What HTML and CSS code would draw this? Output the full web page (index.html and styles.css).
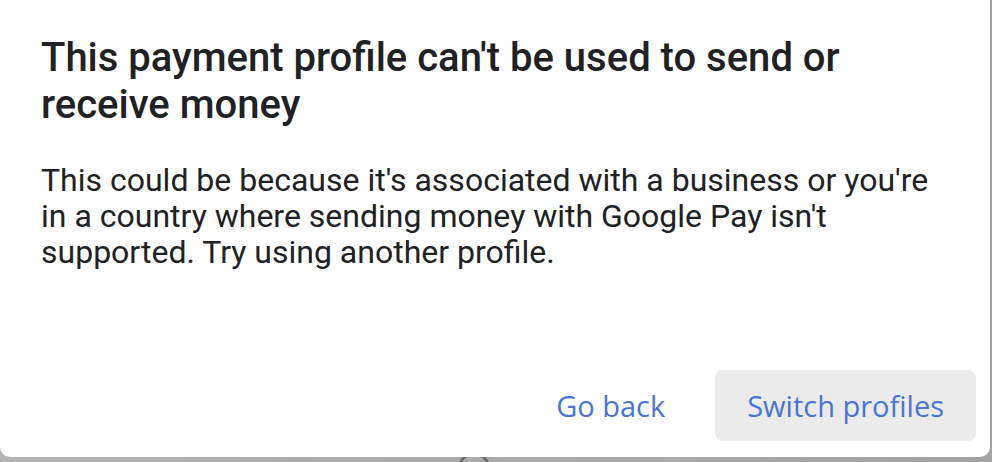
FILE: index.html
```html
<!DOCTYPE html>
<html lang="en">
<head>
<meta charset="utf-8">
<title>Payment profile</title>
<link rel="stylesheet" href="styles.css">
</head>
<body>
<div class="backdrop-ring"></div>
<div class="dialog">
  <div class="content">
    <h1 class="title">This payment profile can't be used to send or receive money</h1>
    <p class="message">This could be because it's associated with a business or you're in a country where sending money with Google Pay isn't supported. Try using another profile.</p>
  </div>
  <div class="actions">
    <button class="btn btn-text">Go back</button>
    <button class="btn btn-tonal">Switch profiles</button>
  </div>
</div>
</body>
</html>
```
FILE: styles.css
```css
html, body {
  margin: 0;
  padding: 0;
}
body {
  width: 992px;
  height: 462px;
  overflow: hidden;
  background: linear-gradient(to right, #b3b3b3, #a2a2a2);
  position: relative;
  font-family: Roboto, "Noto Sans", sans-serif;
}
.backdrop-ring {
  position: absolute;
  left: 458px;
  top: 452px;
  width: 32px;
  height: 32px;
  border: 3px solid #6a6a6a;
  border-radius: 50%;
  box-sizing: border-box;
}
.dialog {
  position: relative;
  width: 990px;
  height: 457px;
  background: #fff;
  border-radius: 0 0 10px 10px;
  display: flex;
  flex-direction: column;
  justify-content: space-between;
  box-sizing: border-box;
}
.content {
  padding: 34px 40px 0 41px;
}
.title {
  margin: 0;
  font-size: 40px;
  line-height: 47px;
  font-weight: 500;
  color: #202124;
}
.message {
  margin: 34px 0 0;
  font-size: 32px;
  line-height: 36px;
  font-weight: 400;
  color: #202124;
}
.actions {
  display: flex;
  justify-content: flex-end;
  gap: 18px;
  padding: 0 14px 16px 0;
}
.btn {
  border: none;
  background: transparent;
  font-family: "Open Sans", Roboto, sans-serif;
  font-weight: 500;
  font-size: 29px;
  color: #4775d8;
  height: 71px;
  padding: 0 32px;
  border-radius: 8px;
}
.btn-tonal {
  background: #ebebeb;
}
```
